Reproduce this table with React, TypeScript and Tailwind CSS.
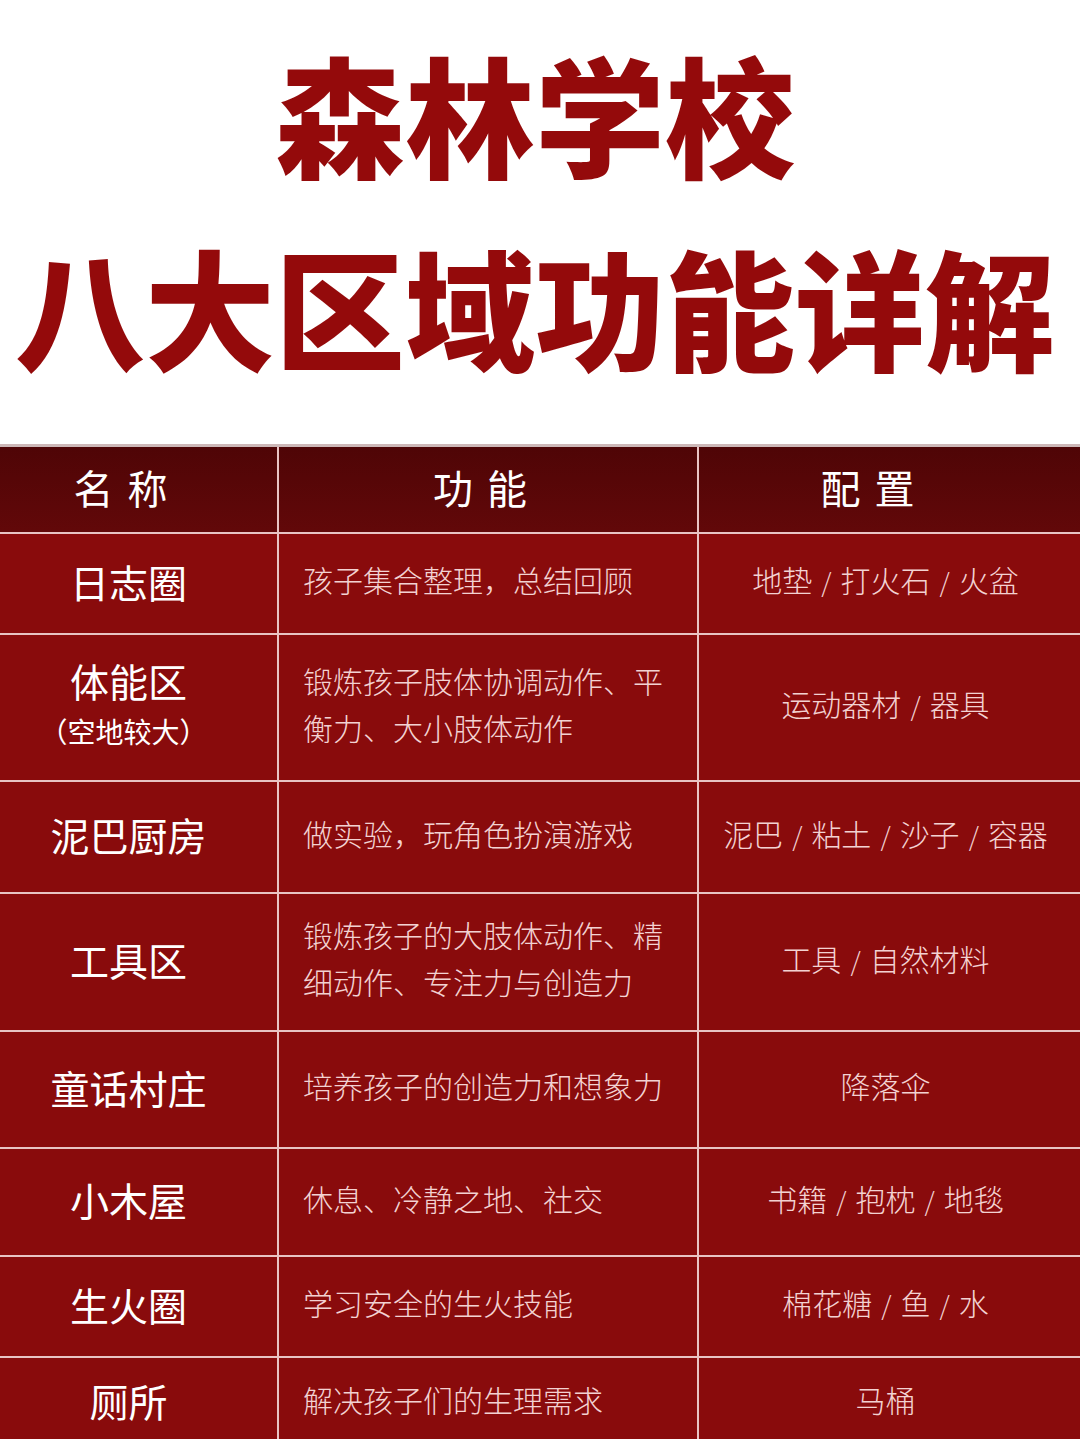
const font = { fontFamily: '"Noto Sans CJK SC", "Noto Sans", sans-serif' }

type Row = {
  name: string
  sub?: string
  func: string[]
  conf: string[]
  h: string
}

const rows: Row[] = [
  { name: "日志圈", func: ["孩子集合整理，总结回顾"], conf: ["地垫", "打火石", "火盆"], h: "h-[99px]" },
  { name: "体能区", sub: "（空地较大）", func: ["锻炼孩子肢体协调动作、平", "衡力、大小肢体动作"], conf: ["运动器材", "器具"], h: "h-[145px]" },
  { name: "泥巴厨房", func: ["做实验，玩角色扮演游戏"], conf: ["泥巴", "粘土", "沙子", "容器"], h: "h-[110px]" },
  { name: "工具区", func: ["锻炼孩子的大肢体动作、精", "细动作、专注力与创造力"], conf: ["工具", "自然材料"], h: "h-[136px]" },
  { name: "童话村庄", func: ["培养孩子的创造力和想象力"], conf: ["降落伞"], h: "h-[115px]" },
  { name: "小木屋", func: ["休息、冷静之地、社交"], conf: ["书籍", "抱枕", "地毯"], h: "h-[106px]" },
  { name: "生火圈", func: ["学习安全的生火技能"], conf: ["棉花糖", "鱼", "水"], h: "h-[99px]" },
  { name: "厕所", func: ["解决孩子们的生理需求"], conf: ["马桶"], h: "h-[90px]" },
]

export default function App() {
  return (
    <div className="w-[1080px] h-[1439px] overflow-hidden bg-white" style={font}>
      <div className="h-[444px] flex flex-col items-center pt-[46px]">
        <div className="h-[130px] text-[130px] leading-[130px] font-black text-[#940a0b] pr-[10px]">森林学校</div>
        <div className="h-[130px] mt-[63px] text-[130px] leading-[130px] font-black text-[#940a0b] whitespace-nowrap pr-[10px]">八大区域功能详解</div>
      </div>
      <div className="border-t-[3px] border-[#cdb8b8] bg-[#e9c4c4] grid grid-cols-[277px_418px_1fr] gap-[2px]">
        <div className="h-[85px] bg-gradient-to-b from-[#4f0506] to-[#620809] flex items-center justify-center pb-[6px] pr-[22px] text-white text-[40px] tracking-[14px]">名称</div>
        <div className="h-[85px] bg-gradient-to-b from-[#4f0506] to-[#620809] flex items-center justify-center pb-[6px] pr-[2px] text-white text-[40px] tracking-[14px]">功能</div>
        <div className="h-[85px] bg-gradient-to-b from-[#4f0506] to-[#620809] flex items-center justify-center pb-[6px] pr-[30px] text-white text-[40px] tracking-[14px]">配置</div>
        {rows.map((r) => (
          <>
            <div key={r.name + "a"} className={`${r.h} bg-[#890b0c] flex flex-col items-center justify-center pb-[6px] pr-[20px] text-white`}>
              <div className="text-[39px] leading-[48px]">{r.name}</div>
              {r.sub && <div className="text-[28px] leading-[46px] mt-[4px] pr-[10px]">{r.sub}</div>}
            </div>
            <div key={r.name + "b"} className={`${r.h} bg-[#890b0c] flex flex-col justify-center pb-[8px] pl-[24px] text-[#f3d2d2] text-[30px] leading-[47px] font-light whitespace-nowrap`}>
              {r.func.map((f) => (
                <div key={f}>{f}</div>
              ))}
            </div>
            <div key={r.name + "c"} className={`${r.h} bg-[#890b0c] flex items-center justify-center pb-[8px] text-[#f3d2d2] text-[30px] font-light whitespace-nowrap pr-[8px]`}>
              {r.conf.map((c, i) => (
                <span key={c}>
                  {i > 0 && <span className="px-[9px] text-[26px]">/</span>}
                  {c}
                </span>
              ))}
            </div>
          </>
        ))}
      </div>
    </div>
  )
}
